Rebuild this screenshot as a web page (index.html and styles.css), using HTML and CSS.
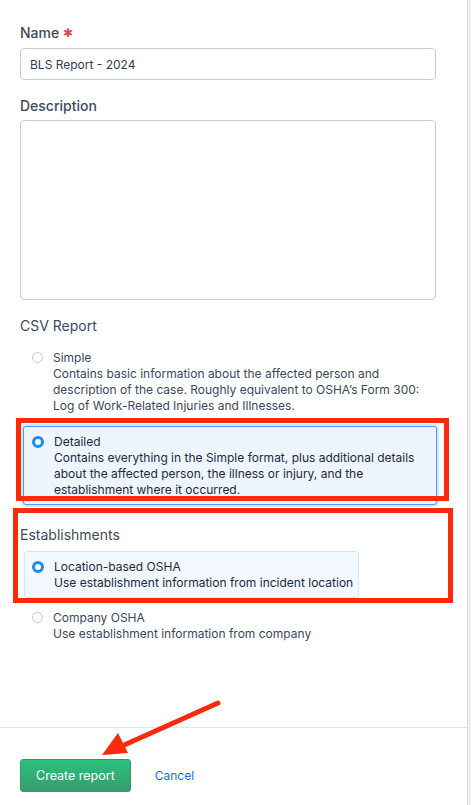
FILE: index.html
```html
<!DOCTYPE html>
<html lang="en">
<head>
    <meta charset="UTF-8">
    <meta name="viewport" content="width=device-width, initial-scale=1.0">
    <title>New BLS Report</title>
    <link rel="stylesheet" href="styles.css">
</head>
<body>

<div class="panel">
    <form class="report-form">
        <label class="field-label strong" for="name">Name <span class="required">&#10033;</span></label>
        <input class="text-input" id="name" type="text" value="BLS Report - 2024">

        <label class="field-label strong spaced" for="description">Description</label>
        <textarea class="text-area" id="description"></textarea>

        <div class="field-label spaced">CSV Report</div>
        <label class="option option-simple">
            <span class="radio"></span>
            <span class="option-text">
                <span class="option-title">Simple</span>
                <span class="option-desc">Contains basic information about the affected person and description of the case. Roughly equivalent to OSHA’s Form 300: Log of Work-Related Injuries and Illnesses.</span>
            </span>
        </label>
        <label class="option option-selected option-detailed">
            <span class="radio radio-checked"></span>
            <span class="option-text">
                <span class="option-title">Detailed</span>
                <span class="option-desc">Contains everything in the Simple format, plus additional details about the affected person, the illness or injury, and the establishment where it occurred.</span>
            </span>
        </label>

        <div class="field-label spaced-lg">Establishments</div>
        <label class="option option-selected option-location">
            <span class="radio radio-checked"></span>
            <span class="option-text">
                <span class="option-title">Location-based OSHA</span>
                <span class="option-desc">Use establishment information from incident location</span>
            </span>
        </label>
        <label class="option option-company">
            <span class="radio"></span>
            <span class="option-text">
                <span class="option-title">Company OSHA</span>
                <span class="option-desc">Use establishment information from company</span>
            </span>
        </label>
    </form>

    <div class="form-footer">
        <button class="create-btn" type="button">Create report</button>
        <a class="cancel-link" href="#">Cancel</a>
    </div>

    <!-- annotations drawn over the form -->
    <div class="annotation annotation-csv"></div>
    <div class="annotation annotation-est"></div>
    <svg class="arrow" width="130" height="60" viewBox="0 0 130 60">
        <line x1="118" y1="3" x2="22" y2="46" stroke="#fb2a0b" stroke-width="5" stroke-linecap="round"/>
        <polygon points="2,55 18,33 28,53" fill="#fb2a0b"/>
    </svg>
</div>

</body>
</html>
```

FILE: styles.css
```css
body {
    margin: 0;
    padding: 0;
    background-color: #eeeff1;
    font-family: 'Inter', 'Liberation Sans', sans-serif;
    color: #3b4a5d;
}
.panel {
    position: relative;
    width: 468px;
    height: 805px;
    background-color: #fff;
    border-right: 1px solid #dcdde0;
    box-sizing: border-box;
    display: flex;
    flex-direction: column;
}
.report-form {
    padding: 24px 31px 0 20px;
    flex: 1;
    display: flex;
    flex-direction: column;
    align-items: flex-start;
}
.field-label {
    display: block;
    font-size: 14px;
    font-weight: 400;
    line-height: 18px;
    color: #3b4a5d;
}
.strong {
    font-weight: 500;
}
.spaced {
    margin-top: 17px;
}
.spaced-lg {
    margin-top: 21px;
}
.required {
    color: #e8434b;
    font-size: 12px;
    position: relative;
    top: -1px;
}
.text-input,
.text-area {
    display: block;
    width: 100%;
    box-sizing: border-box;
    margin-top: 5px;
    border: 1px solid #c9ced6;
    border-radius: 4px;
    font-family: inherit;
    font-size: 12px;
    color: #2f3e52;
    background: #fff;
    outline: none;
}
.text-input {
    height: 32px;
    padding: 0 9px;
}
.text-area {
    height: 180px;
    resize: none;
}
.option {
    display: flex;
    gap: 10px;
    padding: 7px 7px 6px 8px;
    margin-left: 3px;
    font-size: 12px;
    line-height: 16px;
    border: 1px solid transparent;
    border-radius: 3px;
    box-sizing: border-box;
}
.option-text {
    display: flex;
    flex-direction: column;
}
.option-title,
.option-desc {
    color: #38485d;
}
.option-selected .option-title,
.option-selected .option-desc {
    color: #1a2a43;
}
.radio {
    flex: none;
    width: 11px;
    height: 11px;
    margin-top: 2px;
    border: 1px solid #c3c8cf;
    border-radius: 50%;
    background: #fff;
    box-sizing: border-box;
}
.radio-checked {
    width: 12px;
    height: 12px;
    margin-top: 2px;
    border: 3.5px solid #1a8cf0;
}
.option-simple {
    margin-top: 7px;
    width: 414px;
}
.option-detailed {
    margin-top: 5px;
    width: 414px;
    background-color: #eef5fd;
    border-color: #4a9ef2;
    box-shadow: 0 0 0 2px #d3e7fc;
}
.option-location {
    margin-top: 7px;
    margin-left: 4px;
    background-color: #f2f8fe;
    border-color: #d2e6fb;
    padding-left: 7px;
    padding-right: 5px;
}
.option-company {
    margin-top: 4px;
}
.form-footer {
    border-top: 1px solid #e4e5e8;
    height: 78px;
    padding: 31px 20px 0;
    box-sizing: border-box;
    display: flex;
    align-items: flex-start;
    gap: 24px;
}
.create-btn {
    height: 33px;
    padding: 0 15px;
    font-family: inherit;
    font-size: 12.5px;
    color: #fff;
    border: 1px solid #2f9a66;
    border-radius: 3px;
    background: linear-gradient(#27c27b, #3a9b6e);
    cursor: pointer;
}
.cancel-link {
    font-size: 12px;
    color: #1a6fd6;
    text-decoration: none;
    line-height: 33px;
}
.annotation {
    position: absolute;
    border: 5px solid #fb2a0b;
    box-sizing: border-box;
}
.annotation-csv {
    left: 16px;
    top: 418px;
    width: 433px;
    height: 83px;
}
.annotation-est {
    left: 13px;
    top: 508px;
    width: 440px;
    height: 95px;
}
.arrow {
    position: absolute;
    left: 100px;
    top: 700px;
}
```
